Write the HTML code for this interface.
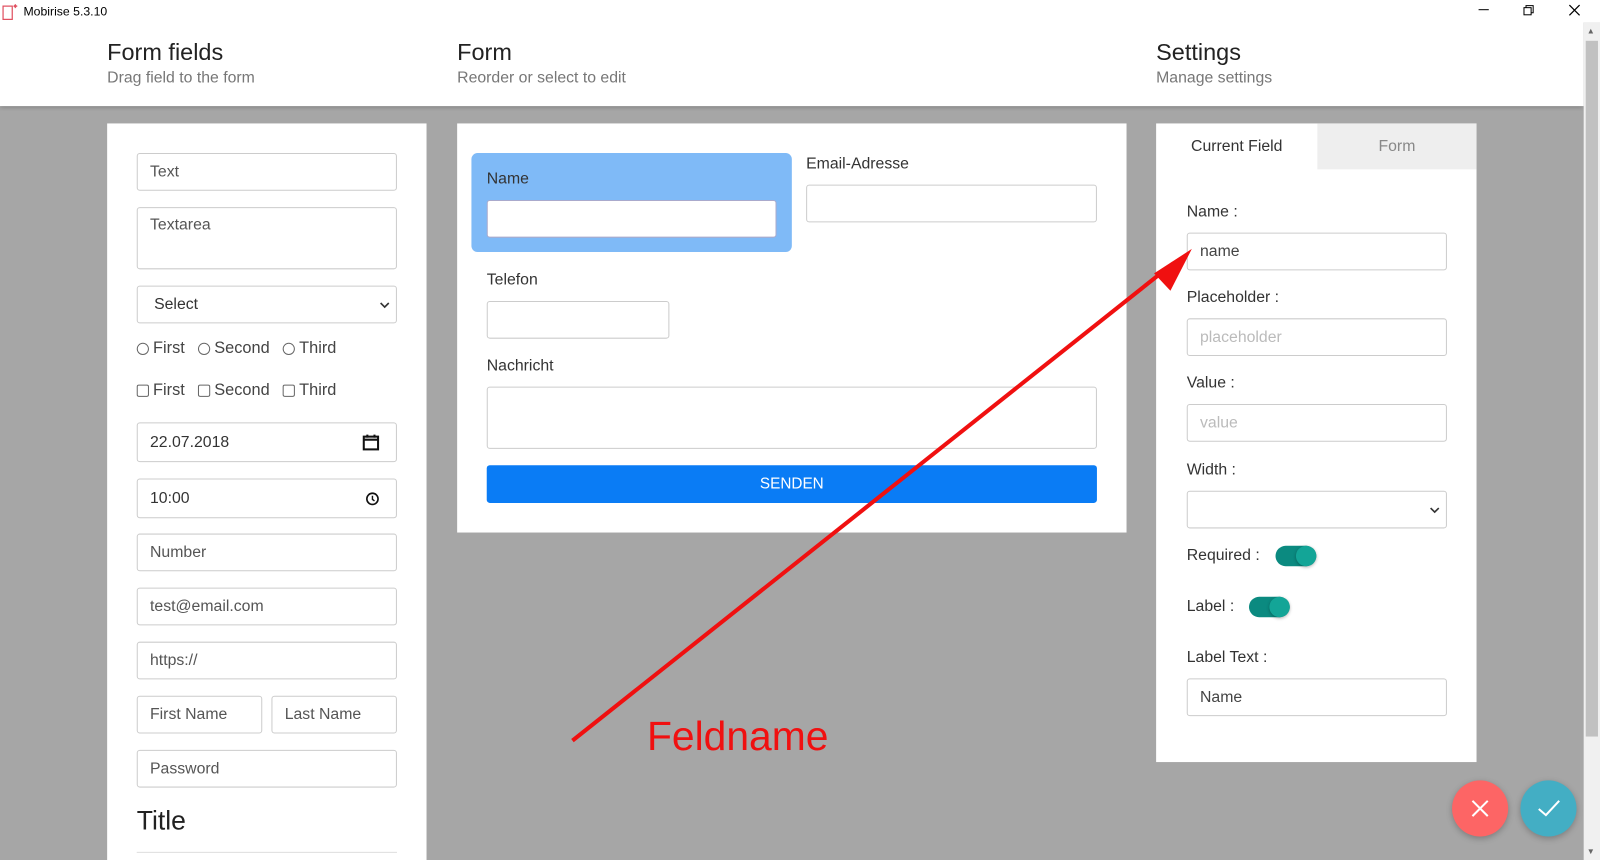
<!DOCTYPE html>
<html><head><meta charset="utf-8">
<style>
*{box-sizing:border-box;margin:0;padding:0}
html,body{width:1600px;height:860px;overflow:hidden;background:#a6a6a6;font-family:"Liberation Sans",sans-serif}
#w{position:absolute;left:0;top:0;width:1568px;height:843px;transform:scale(1.02041,1.02017);transform-origin:0 0;background:#a6a6a6}
.a{position:absolute}
.hdr{left:0;top:0;width:1552px;height:104px;background:#fff;box-shadow:0 2px 4px rgba(0,0,0,.2)}
.h1{font-size:23px;color:#222}
.h2{font-size:15.5px;color:#777}
.panel{background:#fff}
.inp{position:absolute;border:1px solid #ccc;border-radius:3px;background:#fff;font-size:15.5px;color:#555;padding-left:12px;display:flex;align-items:center}
.lbl{position:absolute;font-size:15.5px;color:#333}
.rc{font-size:16px;color:#444;display:flex;align-items:center;gap:4px}
.rad{width:12px;height:12px;border:1px solid #666;border-radius:50%;display:inline-block}
.chk{width:12px;height:12px;border:1px solid #666;border-radius:2px;display:inline-block}
.tog{position:absolute;width:40px;height:20px;border-radius:10px;background:#0b8a80}
.tog:after{content:"";position:absolute;right:0;top:0;width:20px;height:20px;border-radius:50%;background:#13a597;box-shadow:0 1px 3px rgba(0,0,0,.3)}
</style></head><body><div id="w">
<div class="a hdr"></div>
<div class="a" style="left:0;top:0;width:1568px;height:22px;background:#fff"></div>
<svg class="a" style="left:2px;top:3px" width="16" height="17"><rect x="1" y="3" width="9" height="13" fill="none" stroke="#e05060" stroke-width="1.2"/><path d="M12 2l2 2M14 2l-2 2M13 1v4M11 3h4" stroke="#e05060" stroke-width="1"/></svg>
<div class="a" style="left:23px;top:4px;font-size:12px;color:#000">Mobirise 5.3.10</div>
<div class="a" style="left:1449px;top:9px;width:10px;height:1px;background:#000"></div>
<svg class="a" style="left:1492px;top:4px" width="12" height="12"><rect x="1.5" y="3.5" width="7" height="7" fill="none" stroke="#000"/><path d="M3.5 3.5V1.5h7v7h-2" fill="none" stroke="#000"/></svg>
<svg class="a" style="left:1537px;top:4px" width="12" height="12"><path d="M1 1l10 10M11 1L1 11" stroke="#000" stroke-width="1.2"/></svg>
<div class="a" style="left:1552px;top:22px;width:16px;height:821px;background:#f0f0f0"></div>
<div class="a" style="left:1554px;top:40px;width:12px;height:682px;background:#c1c1c1"></div>
<div class="a" style="left:1555px;top:26px;font-size:8px;color:#666">▲</div>
<div class="a" style="left:1555px;top:830px;font-size:8px;color:#666">▼</div>

<div class="a h1" style="left:105px;top:38px">Form fields</div>
<div class="a h2" style="left:105px;top:68px">Drag field to the form</div>
<div class="a h1" style="left:448px;top:38px">Form</div>
<div class="a h2" style="left:448px;top:68px">Reorder or select to edit</div>
<div class="a h1" style="left:1133px;top:38px">Settings</div>
<div class="a h2" style="left:1133px;top:68px">Manage settings</div>

<!-- left panel -->
<div class="a panel" style="left:105px;top:121px;width:313px;height:722px">
<div class="inp" style="left:29px;top:29px;width:255px;height:37px">Text</div>
<div class="inp" style="left:29px;top:82px;width:255px;height:61px;align-items:flex-start;padding-top:8px">Textarea</div>
<div class="inp" style="left:29px;top:159px;width:255px;height:37px;padding-left:16px;color:#333">Select<svg class="a" style="right:6px;top:14px" width="10" height="8"><path d="M1 2l4 4 4-4" fill="none" stroke="#333" stroke-width="1.6"/></svg></div>
<div class="a rc" style="left:29px;top:212px"><span class="rad"></span>First&nbsp;&nbsp;<span class="rad"></span>Second&nbsp;&nbsp;<span class="rad"></span>Third</div>
<div class="a rc" style="left:29px;top:253px"><span class="chk"></span>First&nbsp;&nbsp;<span class="chk"></span>Second&nbsp;&nbsp;<span class="chk"></span>Third</div>
<div class="inp" style="left:29px;top:293px;width:255px;height:39px;color:#333">22.07.2018<svg class="a" style="right:16px;top:10px" width="17" height="17"><rect x="1.5" y="3" width="14" height="12.5" fill="none" stroke="#111" stroke-width="2"/><path d="M1.5 6h14M5 1v3M12 1v3" stroke="#111" stroke-width="2"/></svg></div>
<div class="inp" style="left:29px;top:348px;width:255px;height:39px;color:#333">10:00<svg class="a" style="right:16px;top:12px" width="14" height="14"><circle cx="7" cy="7" r="5.5" fill="none" stroke="#111" stroke-width="1.6"/><path d="M7 4v3.5l2 1.5" fill="none" stroke="#111" stroke-width="1.4"/></svg></div>
<div class="inp" style="left:29px;top:402px;width:255px;height:37px">Number</div>
<div class="inp" style="left:29px;top:455px;width:255px;height:37px">test@email.com</div>
<div class="inp" style="left:29px;top:508px;width:255px;height:37px">https://</div>
<div class="inp" style="left:29px;top:561px;width:123px;height:37px">First Name</div>
<div class="inp" style="left:161px;top:561px;width:123px;height:37px">Last Name</div>
<div class="inp" style="left:29px;top:614px;width:255px;height:37px">Password</div>
<div class="a" style="left:29px;top:668px;font-size:26px;color:#222">Title</div>
<div class="a" style="left:29px;top:714px;width:255px;height:1px;background:#ddd"></div>
</div>

<!-- middle panel -->
<div class="a panel" style="left:448px;top:121px;width:656px;height:401px">
<div class="a" style="left:14px;top:29px;width:314px;height:97px;background:#7fbaf7;border-radius:6px"></div>
<div class="lbl" style="left:29px;top:46px">Name</div>
<div class="inp" style="left:29px;top:75px;width:284px;height:37px;border-color:#aac"></div>
<div class="lbl" style="left:342px;top:31px">Email-Adresse</div>
<div class="inp" style="left:342px;top:60px;width:285px;height:37px"></div>
<div class="lbl" style="left:29px;top:145px">Telefon</div>
<div class="inp" style="left:29px;top:174px;width:179px;height:37px"></div>
<div class="lbl" style="left:29px;top:229px">Nachricht</div>
<div class="inp" style="left:29px;top:258px;width:598px;height:61px"></div>
<div class="a" style="left:29px;top:335px;width:598px;height:37px;background:#0a7cf5;border-radius:3px;color:#fff;font-size:15px;display:flex;align-items:center;justify-content:center">SENDEN</div>
</div>

<!-- right panel -->
<div class="a panel" style="left:1133px;top:121px;width:314px;height:626px">
<div class="a" style="left:158px;top:0;width:156px;height:45px;background:#eee;color:#888;font-size:15.5px;display:flex;align-items:center;justify-content:center">Form</div>
<div class="a" style="left:0;top:0;width:158px;height:45px;color:#333;font-size:15.5px;display:flex;align-items:center;justify-content:center">Current Field</div>
<div class="lbl" style="left:30px;top:78px">Name :</div>
<div class="inp" style="left:30px;top:107px;width:255px;height:37px;color:#444">name</div>
<div class="lbl" style="left:30px;top:162px">Placeholder :</div>
<div class="inp" style="left:30px;top:191px;width:255px;height:37px;color:#bbb">placeholder</div>
<div class="lbl" style="left:30px;top:246px">Value :</div>
<div class="inp" style="left:30px;top:275px;width:255px;height:37px;color:#bbb">value</div>
<div class="lbl" style="left:30px;top:331px">Width :</div>
<div class="inp" style="left:30px;top:360px;width:255px;height:37px"><svg class="a" style="right:6px;top:14px" width="10" height="8"><path d="M1 2l4 4 4-4" fill="none" stroke="#333" stroke-width="1.6"/></svg></div>
<div class="lbl" style="left:30px;top:415px">Required :</div>
<div class="tog" style="left:117px;top:414px"></div>
<div class="lbl" style="left:30px;top:465px">Label :</div>
<div class="tog" style="left:91px;top:464px"></div>
<div class="lbl" style="left:30px;top:515px">Label Text :</div>
<div class="inp" style="left:30px;top:544px;width:255px;height:37px;color:#444">Name</div>
</div>

<!-- annotation -->
<svg class="a" style="left:0;top:0" width="1568" height="843"><line x1="561" y1="726" x2="1150" y2="258" stroke="#f01010" stroke-width="4"/><polygon points="1168,244 1131,268 1147,285" fill="#f01010"/></svg>
<div class="a" style="left:634px;top:700px;font-size:40px;color:#f01010">Feldname</div>

<div class="a" style="left:1423px;top:765px;width:55px;height:55px;border-radius:50%;background:#fd6565;box-shadow:0 2px 6px rgba(0,0,0,.25)"><svg class="a" style="left:18px;top:18px" width="19" height="19"><path d="M2 2l15 15M17 2L2 17" stroke="#fff" stroke-width="2"/></svg></div>
<div class="a" style="left:1490px;top:765px;width:55px;height:55px;border-radius:50%;background:#43aec4;box-shadow:0 2px 6px rgba(0,0,0,.25)"><svg class="a" style="left:16px;top:18px" width="24" height="19"><path d="M2 10l7 6L22 2" fill="none" stroke="#fff" stroke-width="2"/></svg></div>
</div></body></html>
